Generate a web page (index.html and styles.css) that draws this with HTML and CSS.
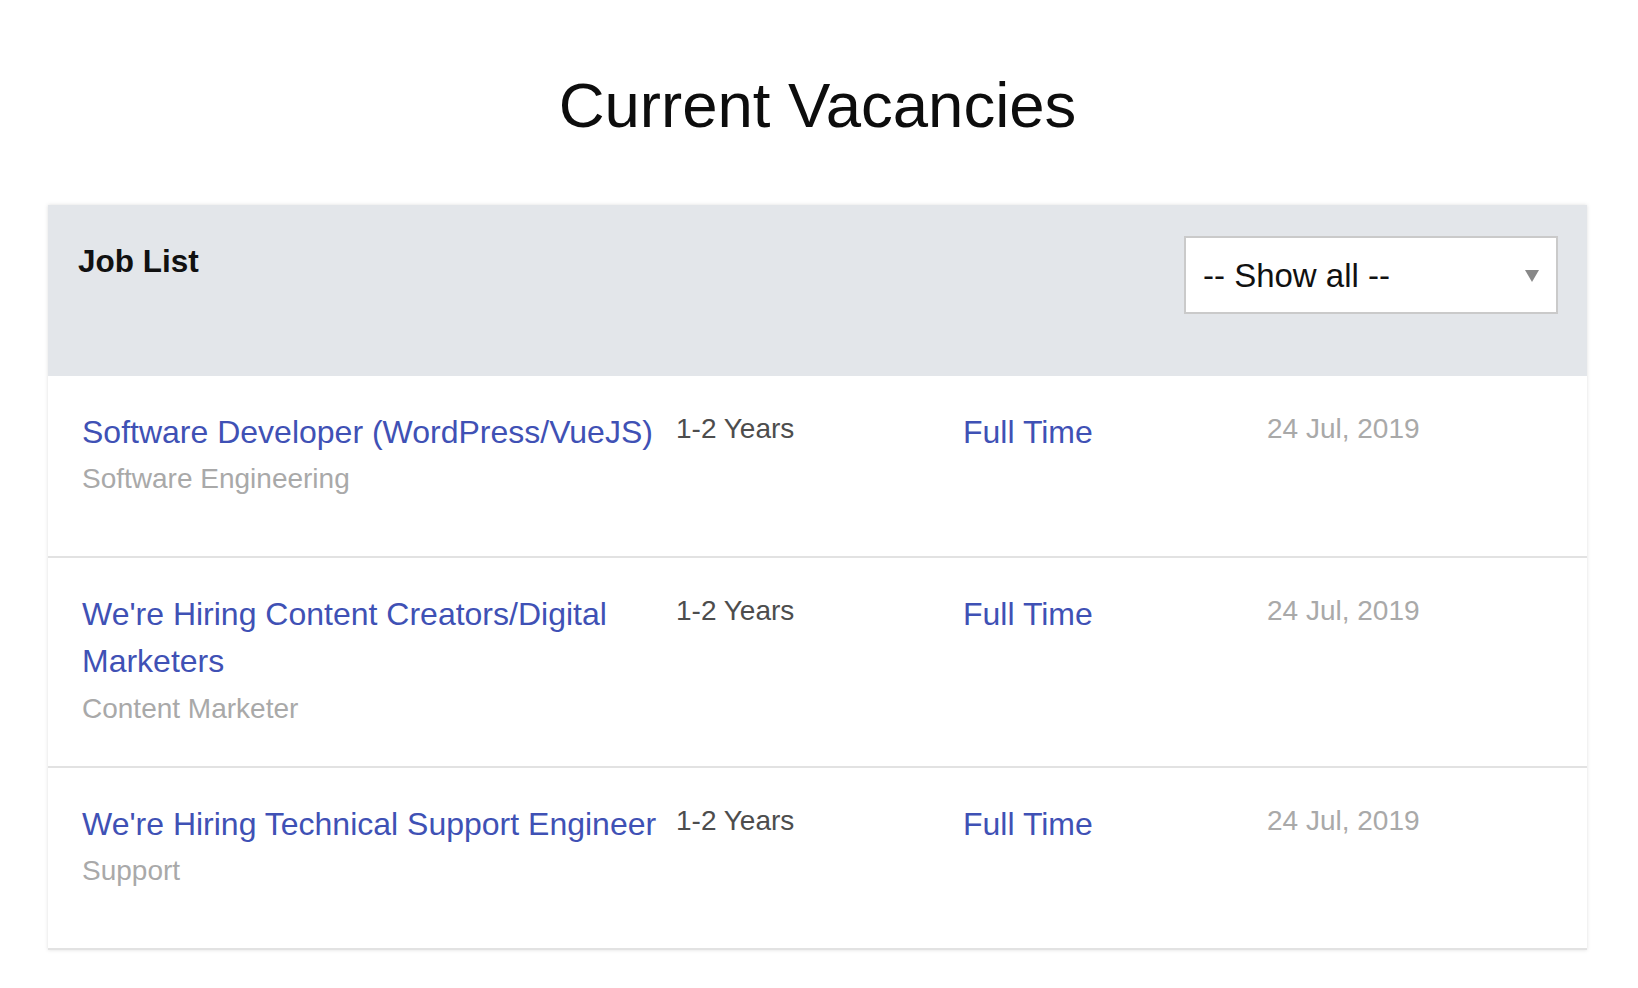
FILE: index.html
```html
<!DOCTYPE html>
<html lang="en">
<head>
<meta charset="utf-8">
<title>Current Vacancies</title>
<link rel="stylesheet" href="styles.css">
</head>
<body>
<main class="page">
  <h1 class="page-title">Current Vacancies</h1>
  <section class="card">
    <header class="card-header">
      <h2 class="card-title">Job List</h2>
      <div class="select-wrap">
        <select class="select">
          <option>-- Show all --</option>
          <option>Software Engineering</option>
          <option>Content Marketer</option>
          <option>Support</option>
        </select>
      </div>
    </header>
    <div class="job-row">
      <div class="job-main">
        <a class="job-title" href="#">Software Developer (WordPress/VueJS)</a>
        <div class="job-dept">Software Engineering</div>
      </div>
      <div class="job-exp">1-2 Years</div>
      <div class="job-type">Full Time</div>
      <div class="job-date">24 Jul, 2019</div>
    </div>
    <div class="job-row">
      <div class="job-main">
        <a class="job-title" href="#">We're Hiring Content Creators/Digital Marketers</a>
        <div class="job-dept">Content Marketer</div>
      </div>
      <div class="job-exp">1-2 Years</div>
      <div class="job-type">Full Time</div>
      <div class="job-date">24 Jul, 2019</div>
    </div>
    <div class="job-row">
      <div class="job-main">
        <a class="job-title" href="#">We're Hiring Technical Support Engineer</a>
        <div class="job-dept">Support</div>
      </div>
      <div class="job-exp">1-2 Years</div>
      <div class="job-type">Full Time</div>
      <div class="job-date">24 Jul, 2019</div>
    </div>
  </section>
</main>
</body>
</html>
```
FILE: styles.css
```css
* { box-sizing: border-box; }

body {
  margin: 0;
  background: #ffffff;
  font-family: "Liberation Sans", Arial, Helvetica, sans-serif;
  color: #111111;
}

.page {
  padding: 0 51px 40px 48px;
}

.page-title {
  margin: 69px 0 64px;
  font-size: 63.5px;
  line-height: 72px;
  font-weight: normal;
  text-align: center;
  color: #0d0d0d;
}

.card {
  background: #ffffff;
  box-shadow: 0 0 4px rgba(0, 0, 0, 0.13);
}

.card-header {
  display: flex;
  justify-content: space-between;
  align-items: flex-start;
  height: 171px;
  padding: 31px 29px 0 30px;
  background: #e3e6ea;
}

.card-title {
  margin: 2px 0 0;
  font-size: 31.5px;
  line-height: 1.5;
  font-weight: bold;
  color: #111111;
}

.select-wrap {
  position: relative;
  width: 374px;
  height: 78px;
}

.select-wrap::after {
  content: "";
  position: absolute;
  right: 19px;
  top: 34px;
  width: 0;
  height: 0;
  border-left: 7.5px solid transparent;
  border-right: 7.5px solid transparent;
  border-top: 12px solid #888888;
  pointer-events: none;
}

.select {
  appearance: none;
  -webkit-appearance: none;
  display: block;
  width: 100%;
  height: 100%;
  margin: 0;
  padding: 0 40px 0 17px;
  border: 2px solid #cacaca;
  border-radius: 0;
  background: #ffffff;
  font-family: "Liberation Sans", Arial, Helvetica, sans-serif;
  font-size: 33px;
  color: #111111;
  outline: none;
}

.job-row {
  display: grid;
  grid-template-columns: 594px 287px 304px 1fr;
  align-items: start;
  min-height: 182px;
  padding: 33px 34px 37px;
  border-bottom: 2px solid #e2e2e2;
}

.job-main {
  display: flex;
  flex-direction: column;
}

.job-title {
  font-size: 32px;
  line-height: 47.25px;
  color: #3f51b5;
  text-decoration: none;
}

.job-dept {
  margin-top: 3px;
  font-size: 28px;
  line-height: 40.5px;
  color: #a9a9a9;
}

.job-exp {
  font-size: 28px;
  line-height: 40.5px;
  color: #4d4d4d;
}

.job-type {
  font-size: 32px;
  line-height: 47.25px;
  color: #3f51b5;
}

.job-date {
  font-size: 28px;
  line-height: 40.5px;
  color: #a9a9a9;
}
```
